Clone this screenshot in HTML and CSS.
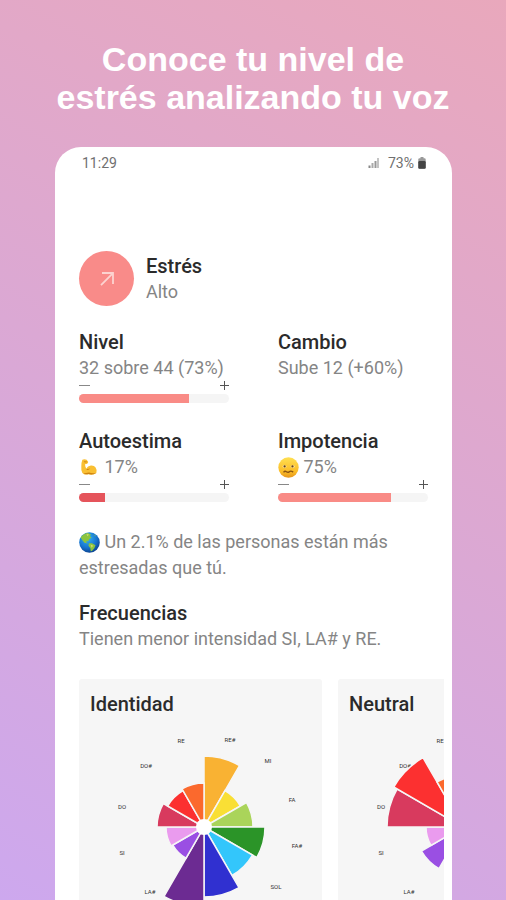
FILE: index.html
```
<!DOCTYPE html>
<html lang="es">
<head>
<meta charset="UTF-8">
<meta name="viewport" content="width=device-width, initial-scale=1.0">
<title>Conoce tu nivel de estrés</title>
<link rel="stylesheet" href="styles.css">
</head>
<body>
<h1 class="headline">Conoce tu nivel de<br>estrés analizando tu voz</h1>
<main class="phone">
  <div class="status-bar">
    <span>11:29</span>
    <div class="status-right">
      <svg class="signal" viewBox="0 0 12 12" width="12" height="12">
        <rect x="0.5" y="8.5" width="2" height="2.5" fill="#888"/>
        <rect x="3.5" y="6" width="2" height="5" fill="#aaa"/>
        <rect x="6.5" y="4" width="2" height="7" fill="#999"/>
        <rect x="9" y="1" width="2" height="10" fill="#c4c4c4"/>
      </svg>
      <span>73%</span>
      <svg viewBox="0 0 8 12" width="8" height="12">
        <rect x="2.5" y="0" width="3" height="2" fill="#999"/>
        <rect x="0.3" y="1.3" width="7.4" height="10.4" rx="1.3" fill="#999"/>
        <rect x="0.3" y="4" width="7.4" height="7.7" rx="1.3" fill="#444"/>
      </svg>
    </div>
  </div>

  <section class="hero">
    <div class="hero-icon">
      <svg viewBox="0 0 16 16" width="16" height="16" fill="none" stroke="#fcd3d0" stroke-width="1.8">
        <path d="M2 14.2 L14 2.2 M3 2 H14 V13"/>
      </svg>
    </div>
    <div>
      <h2>Estrés</h2>
      <p>Alto</p>
    </div>
  </section>

  <section class="metrics">
    <div class="metric">
      <h2>Nivel</h2>
      <p>32 sobre 44 (73%)</p>
      <div class="scale"><span class="minus"></span><span class="plus"></span></div>
      <div class="bar"><div class="fill" style="width: 73%"></div></div>
    </div>
    <div class="metric">
      <h2>Cambio</h2>
      <p>Sube 12 (+60%)</p>
    </div>
    <div class="metric">
      <h2>Autoestima</h2>
      <p>
        <svg class="emoji" viewBox="0 0 20 20">
          <path d="M3.2 2.6 Q4.8 1.8 7.3 2.5 L8.8 4.8 Q8.6 6.4 7.2 6.6 L5.7 7 Q5.8 9.7 7.2 11.2 Q8 8.5 11.4 8 Q14.5 7.8 15.8 10 Q17.4 12.2 16.5 15.2 Q13 17.6 9 16.5 Q5 17.4 3.2 15.2 Q1.8 13 2.2 9 Q2.2 5 3.2 2.6Z" fill="#f9bf32"/>
          <path d="M4.2 15.6 Q6 17 9 16.3 Q13 17.5 16.5 15.2 Q12.5 16 9.5 14.8 Q6.5 15.5 4.2 15.6Z M7.2 11.2 Q9 11.8 10.7 10.8 Q9.5 12.7 7.3 12.2Z M4.5 4 L7.8 4.3 L7 5.3 L5 5.1Z" fill="#cf8410"/>
        </svg>
        17%
      </p>
      <div class="scale"><span class="minus"></span><span class="plus"></span></div>
      <div class="bar"><div class="fill fill-low" style="width: 17%"></div></div>
    </div>
    <div class="metric">
      <h2>Impotencia</h2>
      <p>
        <svg class="emoji" viewBox="0 0 20 20">
          <defs>
            <linearGradient id="face" x1="0" y1="0" x2="0" y2="1">
              <stop offset="0" stop-color="#ffe052"/>
              <stop offset="0.7" stop-color="#fbbc27"/>
              <stop offset="1" stop-color="#e5951c"/>
            </linearGradient>
          </defs>
          <circle cx="10" cy="10" r="9.7" fill="url(#face)"/>
          <ellipse cx="6.2" cy="9" rx="1.8" ry="1.2" fill="#fff0bb"/>
          <ellipse cx="14" cy="9" rx="1.8" ry="1.2" fill="#fff0bb"/>
          <circle cx="6.3" cy="9" r="1.1" fill="#6b4310"/>
          <circle cx="13.8" cy="9" r="1.1" fill="#6b4310"/>
          <path d="M5.3 14.6 Q6.5 12.8 8 14 T10.8 14 T14.5 14.4" fill="none" stroke="#8b5412" stroke-width="1.3"/>
        </svg>
        75%
      </p>
      <div class="scale"><span class="minus"></span><span class="plus"></span></div>
      <div class="bar"><div class="fill" style="width: 75%"></div></div>
    </div>
  </section>

  <p class="note">
    <svg class="emoji" viewBox="0 0 20 20">
      <defs>
        <radialGradient id="sea" cx="0.4" cy="0.3" r="0.75">
          <stop offset="0" stop-color="#35b5f2"/>
          <stop offset="0.6" stop-color="#1674cf"/>
          <stop offset="1" stop-color="#0b3d88"/>
        </radialGradient>
      </defs>
      <circle cx="10" cy="10" r="9.8" fill="url(#sea)"/>
      <path d="M1.6 5.3 Q4 1.5 8.2 1 L11.3 2.2 L10.5 4 L12 5.4 L9.8 6.7 L8.8 8.8 L6.8 8.8 L7.3 10.3 L9.3 11 L5.2 10.2 L3 7.5Z M9.5 10.6 L12.4 10.8 L15.7 12.6 L14.6 15.4 L12.3 18 L11.2 18.4 L10.8 15.4 L9 13Z M13.8 2.2 L16.3 3.7 L15.5 4Z" fill="#8bc43f"/>
      <path d="M7 2 L9.5 2.3 L8.2 4Z M11 12 L13.5 13 L12 15Z" fill="#d6d86b"/>
    </svg>
    Un 2.1% de las personas están más estresadas que tú.
  </p>

  <section class="frequencies">
    <h2>Frecuencias</h2>
    <p>Tienen menor intensidad SI, LA# y RE.</p>
    <div class="cards">
      <article class="card">
        <h2>Identidad</h2>
        <svg class="rose" id="identidad" viewBox="-125 -110 243 220"></svg>
      </article>
      <article class="card">
        <h2>Neutral</h2>
        <svg class="rose" id="neutral" viewBox="-125 -110 243 220"></svg>
      </article>
    </div>
  </section>
</main>
<script>
  // one entry per 30 degrees, clockwise from the top
  const notes = [
    { name: 'RE#', color: '#f9b233', x: 26, y: -87 },
    { name: 'MI', color: '#f9df35', x: 64, y: -66 },
    { name: 'FA', color: '#aad45a', x: 88, y: -27 },
    { name: 'FA#', color: '#2b9428', x: 93, y: 19 },
    { name: 'SOL', color: '#33c6fb', x: 72, y: 60 },
    { name: 'SOL#', color: '#3030d0', x: 27, y: 88 },
    { name: 'LA', color: '#6c2b92', x: -22, y: 88 },
    { name: 'LA#', color: '#9a4fe3', x: -54, y: 65 },
    { name: 'SI', color: '#ea9bee', x: -82, y: 26 },
    { name: 'DO', color: '#d83a5e', x: -82, y: -20 },
    { name: 'DO#', color: '#fc3030', x: -58, y: -61 },
    { name: 'RE', color: '#fb692d', x: -23, y: -86 }
  ];

  function point(angle, r) {
    const rad = angle * Math.PI / 180;
    return (r * Math.sin(rad)).toFixed(2) + ' ' + (-r * Math.cos(rad)).toFixed(2);
  }

  function drawRose(id, values) {
    let labels = '';
    let wedges = '';
    notes.forEach((note, i) => {
      const r = values[i];
      labels += `<text x="${note.x}" y="${note.y + 2}">${note.name}</text>`;
      wedges += `<path d="M0 0 L${point(i * 30, r)} A${r} ${r} 0 0 1 ${point(i * 30 + 30, r)} Z" fill="${note.color}"/>`;
    });
    document.getElementById(id).innerHTML = labels + wedges + '<circle r="8"/>';
  }

  drawRose('identidad', [71, 42, 49, 61, 56, 70, 80, 36, 38, 47, 42, 44]);
  drawRose('neutral', [60, 45, 50, 55, 50, 60, 34, 48, 37, 76, 80, 52]);
</script>
</body>
</html>
```
FILE: styles.css
```
* {
  box-sizing: border-box;
}
body {
  display: flex;
  flex-direction: column;
  height: 100vh;
  margin: 0;
  overflow: hidden;
  font-family: Roboto, "Liberation Sans", sans-serif;
  background: linear-gradient(208deg, #e9a8bc 0%, #dba8d4 50%, #cda8ee 100%);
}
h1, h2, p {
  margin: 0;
}
h2 {
  font-size: 20px;
  line-height: 26px;
  font-weight: 500;
  color: #2b2b2b;
}
p {
  font-size: 18px;
  line-height: 26px;
  color: #858585;
}
.headline {
  padding: 40px 0 31px;
  font-family: "Liberation Sans", Arial, sans-serif;
  font-size: 34px;
  line-height: 38px;
  text-align: center;
  color: #fff;
}
.phone {
  flex: 1;
  min-height: 0;
  margin: 0 54px 0 55px;
  padding: 6px 8px 0 24px;
  border-radius: 26px 26px 0 0;
  overflow: hidden;
  background: #fff;
}
.status-bar {
  display: flex;
  justify-content: space-between;
  padding: 0 18px 0 3px;
  font-size: 14px;
  line-height: 20px;
  color: #707070;
}
.status-right {
  display: flex;
  align-items: center;
  gap: 4px;
}
.signal {
  margin-right: 4px;
}
.hero {
  display: flex;
  align-items: center;
  gap: 12px;
  margin-top: 78px;
}
.hero-icon {
  display: flex;
  align-items: center;
  justify-content: center;
  width: 55px;
  height: 55px;
  border-radius: 50%;
  background: #f98b89;
}
.metrics {
  display: grid;
  grid-template-columns: 1fr 1fr;
  gap: 25px 49px;
  margin: 23px 16px 0 0;
}
.scale {
  display: flex;
  align-items: center;
  justify-content: space-between;
  height: 8px;
}
.minus {
  width: 11px;
  height: 1px;
  background: #888;
}
.plus {
  width: 9px;
  height: 9px;
  background:
    linear-gradient(#555, #555) center / 9px 1px no-repeat,
    linear-gradient(#555, #555) center / 1px 9px no-repeat;
}
.bar {
  height: 9px;
  margin-top: 5px;
  border-radius: 5px;
  overflow: hidden;
  background: #f5f5f5;
}
.fill {
  height: 100%;
  background: #f98b86;
}
.fill-low {
  background: #e5545b;
}
.emoji {
  width: 21px;
  height: 21px;
  vertical-align: -5px;
}
.note {
  margin: 27px 16px 0 0;
}
.frequencies {
  margin-top: 19px;
}
.cards {
  display: flex;
  gap: 16px;
  margin-top: 27px;
  overflow: hidden;
}
.card {
  flex: 0 0 243px;
  padding-top: 12px;
  border-radius: 3px;
  background: #f6f6f6;
}
.card h2 {
  padding-left: 11px;
}
.rose {
  display: block;
  width: 100%;
}
.rose text {
  font-size: 6px;
  text-anchor: middle;
  fill: #333;
}
.rose path {
  stroke: #f6f6f6;
  stroke-width: 1.5;
}
.rose circle {
  fill: #fff;
}
```
